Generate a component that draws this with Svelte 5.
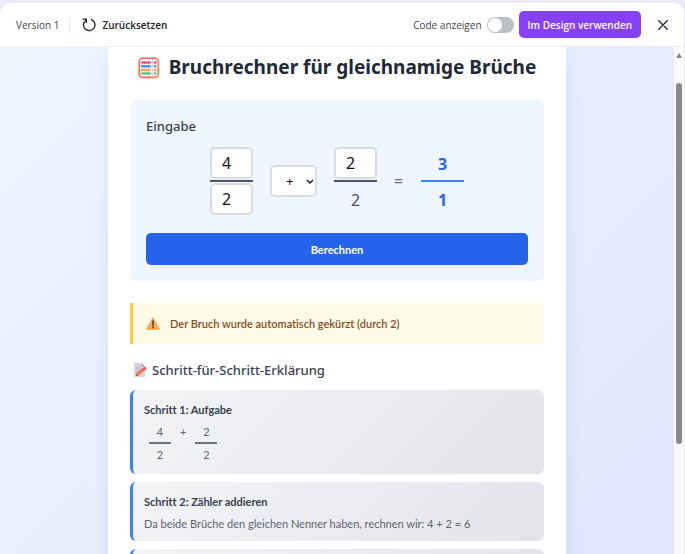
<script>
  let first = $state(4);
  let second = $state(2);
  let denominator = $state(2);
  let operator = $state("+");
  let showCode = $state(false);
  let result = $state(solve());

  function gcd(a, b) {
    return b ? gcd(b, a % b) : Math.abs(a);
  }

  function solve() {
    const sum = operator === "+" ? +first + +second : first - second;
    const factor = gcd(sum, +denominator) || 1;
    return {
      first,
      second,
      denominator,
      operator,
      sum,
      factor,
      top: sum / factor,
      bottom: denominator / factor,
    };
  }

  const calculate = (e) => {
    e.preventDefault();
    result = solve();
  };

  const reset = () => {
    first = 4;
    second = 2;
    denominator = 2;
    operator = "+";
    result = solve();
  };
</script>

<div class="modal">
  <header class="toolbar">
    <span class="version">Version 1</span>
    <button class="reset" type="button" onclick={reset}>
      <svg width="14" height="14" viewBox="0 0 14 14" fill="none" stroke="currentColor" stroke-width="1.3" stroke-linecap="round" stroke-linejoin="round">
        <path d="M9.3 1.6A5.7 5.7 0 1 1 4 2.2" />
        <path d="M1.2 1.2H4.4V4.6" />
      </svg>
      Zurücksetzen
    </button>
    <label class="code-toggle">
      Code anzeigen
      <input type="checkbox" role="switch" bind:checked={showCode} />
    </label>
    <button class="use" type="button">Im Design verwenden</button>
    <button class="close" type="button" aria-label="Schließen">
      <svg width="10" height="10" viewBox="0 0 10 10" fill="none" stroke="currentColor" stroke-width="1.3" stroke-linecap="round">
        <path d="M.8.8l8.4 8.4M9.2.8L.8 9.2" />
      </svg>
    </button>
  </header>

  <div class="viewport">
    <div class="stage">
      <main class="card">
        <h1>
          <svg width="22" height="22" viewBox="0 0 22 22">
            <rect x="1.2" y="1.2" width="19.2" height="19.2" rx="3.5" fill="#f8f4f5" stroke="#f8694f" stroke-width="1.6" />
            <path d="M17 1.2a3.5 3.5 0 0 1 3.4 3.5v12.2a3.5 3.5 0 0 1-3.5 3.5H13" fill="none" stroke="#fb9361" stroke-width="1.6" />
            <path d="M2 5.5h18M2 9.2h18M2 12.9h18M2 16.6h18" stroke="#b9adb5" stroke-width=".6" />
            <g fill="none" stroke-width="2.5" stroke-dasharray="1.7 .3">
              <path d="M3.4 5.5h9.2M16.2 5.5h2" stroke="#ec3f73" />
              <path d="M3.4 9.2h9.2M16.2 9.2h2" stroke="#3d83d8" />
              <path d="M3.4 12.9h9.2M16.2 12.9h2" stroke="#f6a143" />
              <path d="M3.4 16.6h9.2M16.2 16.6h2" stroke="#4fc078" />
            </g>
            <path d="M14.5 2v18" stroke="#d8ced6" stroke-width=".7" />
          </svg>
          Bruchrechner für gleichnamige Brüche
        </h1>

        <form class="panel" onsubmit={calculate}>
          <h2>Eingabe</h2>
          <div class="equation">
            <div class="fraction">
              <input type="text" inputmode="numeric" aria-label="Erster Zähler" bind:value={first} />
              <span class="bar"></span>
              <input type="text" inputmode="numeric" aria-label="Nenner" bind:value={denominator} />
            </div>
            <div class="operator">
              <select aria-label="Rechenzeichen" bind:value={operator}>
                <option value="+">+</option>
                <option value="−">−</option>
              </select>
              <svg width="8" height="6" viewBox="0 0 8 6" fill="none" stroke="#111" stroke-width="1.4">
                <path d="M1 1l3 3 3-3" />
              </svg>
            </div>
            <div class="fraction">
              <input type="text" inputmode="numeric" aria-label="Zweiter Zähler" bind:value={second} />
              <span class="bar"></span>
              <span class="number">{denominator}</span>
            </div>
            <span class="equals">=</span>
            <div class="fraction result">
              <span class="number">{result.top}</span>
              <span class="bar"></span>
              <span class="number">{result.bottom}</span>
            </div>
          </div>
          <button class="calculate" type="submit">Berechnen</button>
        </form>

        {#if result.factor > 1}
          <p class="notice">
            <svg width="14" height="13" viewBox="0 0 14 13">
              <path d="M7 .8L13.5 12.3H.5z" fill="#fbb04f" stroke="#f5a04c" stroke-width="1" stroke-linejoin="round" />
              <path d="M7 4v4.4" stroke="#46333c" stroke-width="1.5" stroke-linecap="round" />
              <circle cx="7" cy="10.5" r=".9" fill="#46333c" />
            </svg>
            Der Bruch wurde automatisch gekürzt (durch {result.factor})
          </p>
        {/if}

        <h2 class="steps-title">
          <svg width="14" height="14" viewBox="0 0 14 14">
            <path d="M1 0h7.5L12 3.5V14H1z" fill="#d9d5e2" />
            <path d="M8.5 0L12 3.5H8.5z" fill="#aaa4b8" />
            <path d="M3 4h4M3 6.2h5M3 8.4h3M3 10.6h2" stroke="#aaa5b9" stroke-width=".8" />
            <path d="M4.2 11.5L10 6.8" stroke="#fb7447" stroke-width="3.2" />
            <path d="M10 6.8l1.8-1.3" stroke="#f0605a" stroke-width="3.2" stroke-linecap="round" />
            <path d="M2.6 13.2l.6-2.3 1.6 1.9z" fill="#59424b" />
          </svg>
          Schritt-für-Schritt-Erklärung
        </h2>

        <section class="step">
          <h3>Schritt 1: Aufgabe</h3>
          <div class="task">
            <div class="small-fraction"><span>{result.first}</span><span>{result.denominator}</span></div>
            <span>{result.operator}</span>
            <div class="small-fraction"><span>{result.second}</span><span>{result.denominator}</span></div>
          </div>
        </section>

        <section class="step">
          <h3>Schritt 2: Zähler {result.operator === "+" ? "addieren" : "subtrahieren"}</h3>
          <p>
            Da beide Brüche den gleichen Nenner haben, rechnen wir: {result.first}
            {result.operator}
            {result.second} = {result.sum}
          </p>
        </section>

        <section class="step"></section>
      </main>
    </div>
    <div class="scrollbar" aria-hidden="true">
      <span class="arrow"></span>
      <span class="thumb"></span>
    </div>
  </div>
</div>

<style>
  :global(body) {
    margin: 0;
    background: #eeeaf8;
  }

  .modal,
  .modal * {
    box-sizing: border-box;
  }

  .modal {
    display: flex;
    flex-direction: column;
    height: calc(100vh - 3px);
    margin: 3px 1px 0 0;
    border-radius: 10px 10px 0 0;
    overflow: hidden;
    background: #fff;
    color: #1f2937;
    font-family: Lato, "Noto Sans", sans-serif;
    font-size: 11px;
    font-variant-ligatures: none;
  }

  button,
  input,
  select {
    font: inherit;
    color: inherit;
  }

  button {
    padding: 0;
    border: 0;
    background: none;
    cursor: pointer;
  }

  h1,
  h2,
  h3,
  p {
    margin: 0;
  }

  svg {
    flex: none;
    display: block;
  }

  .toolbar {
    display: flex;
    flex: none;
    align-items: center;
    height: 44px;
    padding: 0 16px;
    border-bottom: 1px solid #eceef1;
    color: #1c2025;
    font-family: "Open Sans", sans-serif;
    font-size: 10px;
  }

  .version {
    color: #41464c;
  }

  .reset {
    display: flex;
    align-items: center;
    gap: 6px;
    margin-left: 10px;
    padding-left: 12px;
    border-left: 1px solid #e8e8ec;
    font-weight: 600;
  }

  .code-toggle {
    display: flex;
    align-items: center;
    gap: 5px;
    margin-left: auto;
    color: #41464c;
  }

  .code-toggle input {
    display: flex;
    appearance: none;
    width: 27px;
    height: 16px;
    margin: 0;
    padding: 1px;
    border-radius: 8px;
    background: #bcc0c4;
  }

  .code-toggle input::before {
    content: "";
    width: 14px;
    height: 14px;
    border-radius: 50%;
    background: #fff;
  }

  .code-toggle input:checked {
    justify-content: flex-end;
    background: #8b3dff;
  }

  .use {
    height: 27px;
    margin-left: 5px;
    padding: 0 9px;
    border-radius: 5px;
    background: #8640fb;
    color: #fff;
    font-weight: 600;
  }

  .close {
    margin: 0 0 0 17px;
  }

  .viewport {
    display: flex;
    flex: 1;
    min-height: 0;
  }

  .stage {
    flex: 1;
    overflow: hidden;
    padding: 0 16px;
    background: linear-gradient(135deg, #eef5ff, #e1e8fd 90%);
  }

  .card {
    max-width: 458px;
    min-height: 100%;
    margin: 0 auto;
    padding: 5px 22px 22px;
    background: #fff;
    box-shadow: 0 8px 18px rgba(40, 60, 120, 0.09);
  }

  h1,
  h2,
  .equation {
    font-family: "Noto Sans", sans-serif;
  }

  h1 {
    display: flex;
    align-items: center;
    justify-content: center;
    gap: 9px;
    margin-bottom: 17px;
    font-size: 19px;
    line-height: 31px;
    font-weight: 700;
    white-space: nowrap;
  }

  h2 {
    color: #374151;
    font-size: 13px;
    line-height: 20px;
    font-weight: 500;
  }

  .panel {
    padding: 16px;
    border-radius: 6px;
    background: #eff6ff;
  }

  .equation {
    display: flex;
    align-items: center;
    justify-content: center;
    gap: 17px;
    margin: 11px 0 18px;
  }

  .fraction {
    display: flex;
    flex-direction: column;
    gap: 1px;
    width: 43px;
    color: #4b5563;
    font-size: 16px;
    text-align: center;
  }

  .fraction input {
    width: 100%;
    height: 32px;
    padding: 0 10px 0 0;
    border: 2px solid #d9dde2;
    border-radius: 5px;
    background: #fff;
    color: #111;
    text-align: center;
  }

  .bar {
    height: 2px;
    background: #4b5563;
  }

  .number {
    height: 32px;
    line-height: 34px;
  }

  .result {
    color: #2563eb;
    font-weight: 700;
  }

  .result .bar {
    background: #3b82f6;
  }

  .operator {
    position: relative;
  }

  .operator select {
    display: block;
    appearance: none;
    width: 47px;
    height: 32px;
    padding: 0 0 0 14px;
    border: 2px solid #d9dde2;
    border-radius: 5px;
    background: #fff;
    color: #111;
    font-size: 13px;
  }

  .operator svg {
    position: absolute;
    top: 14px;
    right: 3px;
    pointer-events: none;
  }

  .equals {
    width: 10px;
    color: #6b7280;
    font-size: 16px;
  }

  .calculate {
    width: 100%;
    height: 32px;
    border-radius: 5px;
    background: #2563eb;
    color: #fff;
    font-weight: 700;
  }

  .notice {
    display: flex;
    align-items: center;
    gap: 10px;
    height: 41px;
    margin: 22px 0 16px;
    padding-left: 13px;
    border-left: 3px solid #facc3d;
    background: #fefce8;
    color: #854d1e;
    font-weight: 600;
  }

  .steps-title {
    display: flex;
    align-items: center;
    gap: 5px;
    margin: 0 0 10px 3px;
  }

  .step {
    min-height: 44px;
    margin-bottom: 8px;
    padding: 11px 11px 9px;
    border-left: 3px solid #3b82f6;
    border-radius: 6px;
    background: linear-gradient(135deg, #f3f4f6, #e3e4e8);
    color: #5b6472;
  }

  h3 {
    color: #374151;
    font-size: 11px;
    line-height: 18px;
    font-weight: 700;
  }

  .step p {
    margin-top: 4px;
    line-height: 17px;
  }

  .task {
    display: flex;
    gap: 9px;
    margin: 2px 0 0 5px;
    line-height: 21px;
  }

  .small-fraction {
    display: flex;
    flex-direction: column;
    width: 22px;
    text-align: center;
  }

  .small-fraction span:first-child {
    border-bottom: 2px solid #6b7280;
  }

  .scrollbar {
    display: flex;
    flex: none;
    flex-direction: column;
    align-items: center;
    width: 10px;
    padding-top: 6px;
    background: #fafafa;
  }

  .arrow {
    border: 3px solid transparent;
    border-top: 0;
    border-bottom: 5px solid #858585;
  }

  .thumb {
    width: 6px;
    height: 72%;
    margin-top: 25px;
    border-radius: 3px;
    background: #8a8a8a;
  }
</style>
